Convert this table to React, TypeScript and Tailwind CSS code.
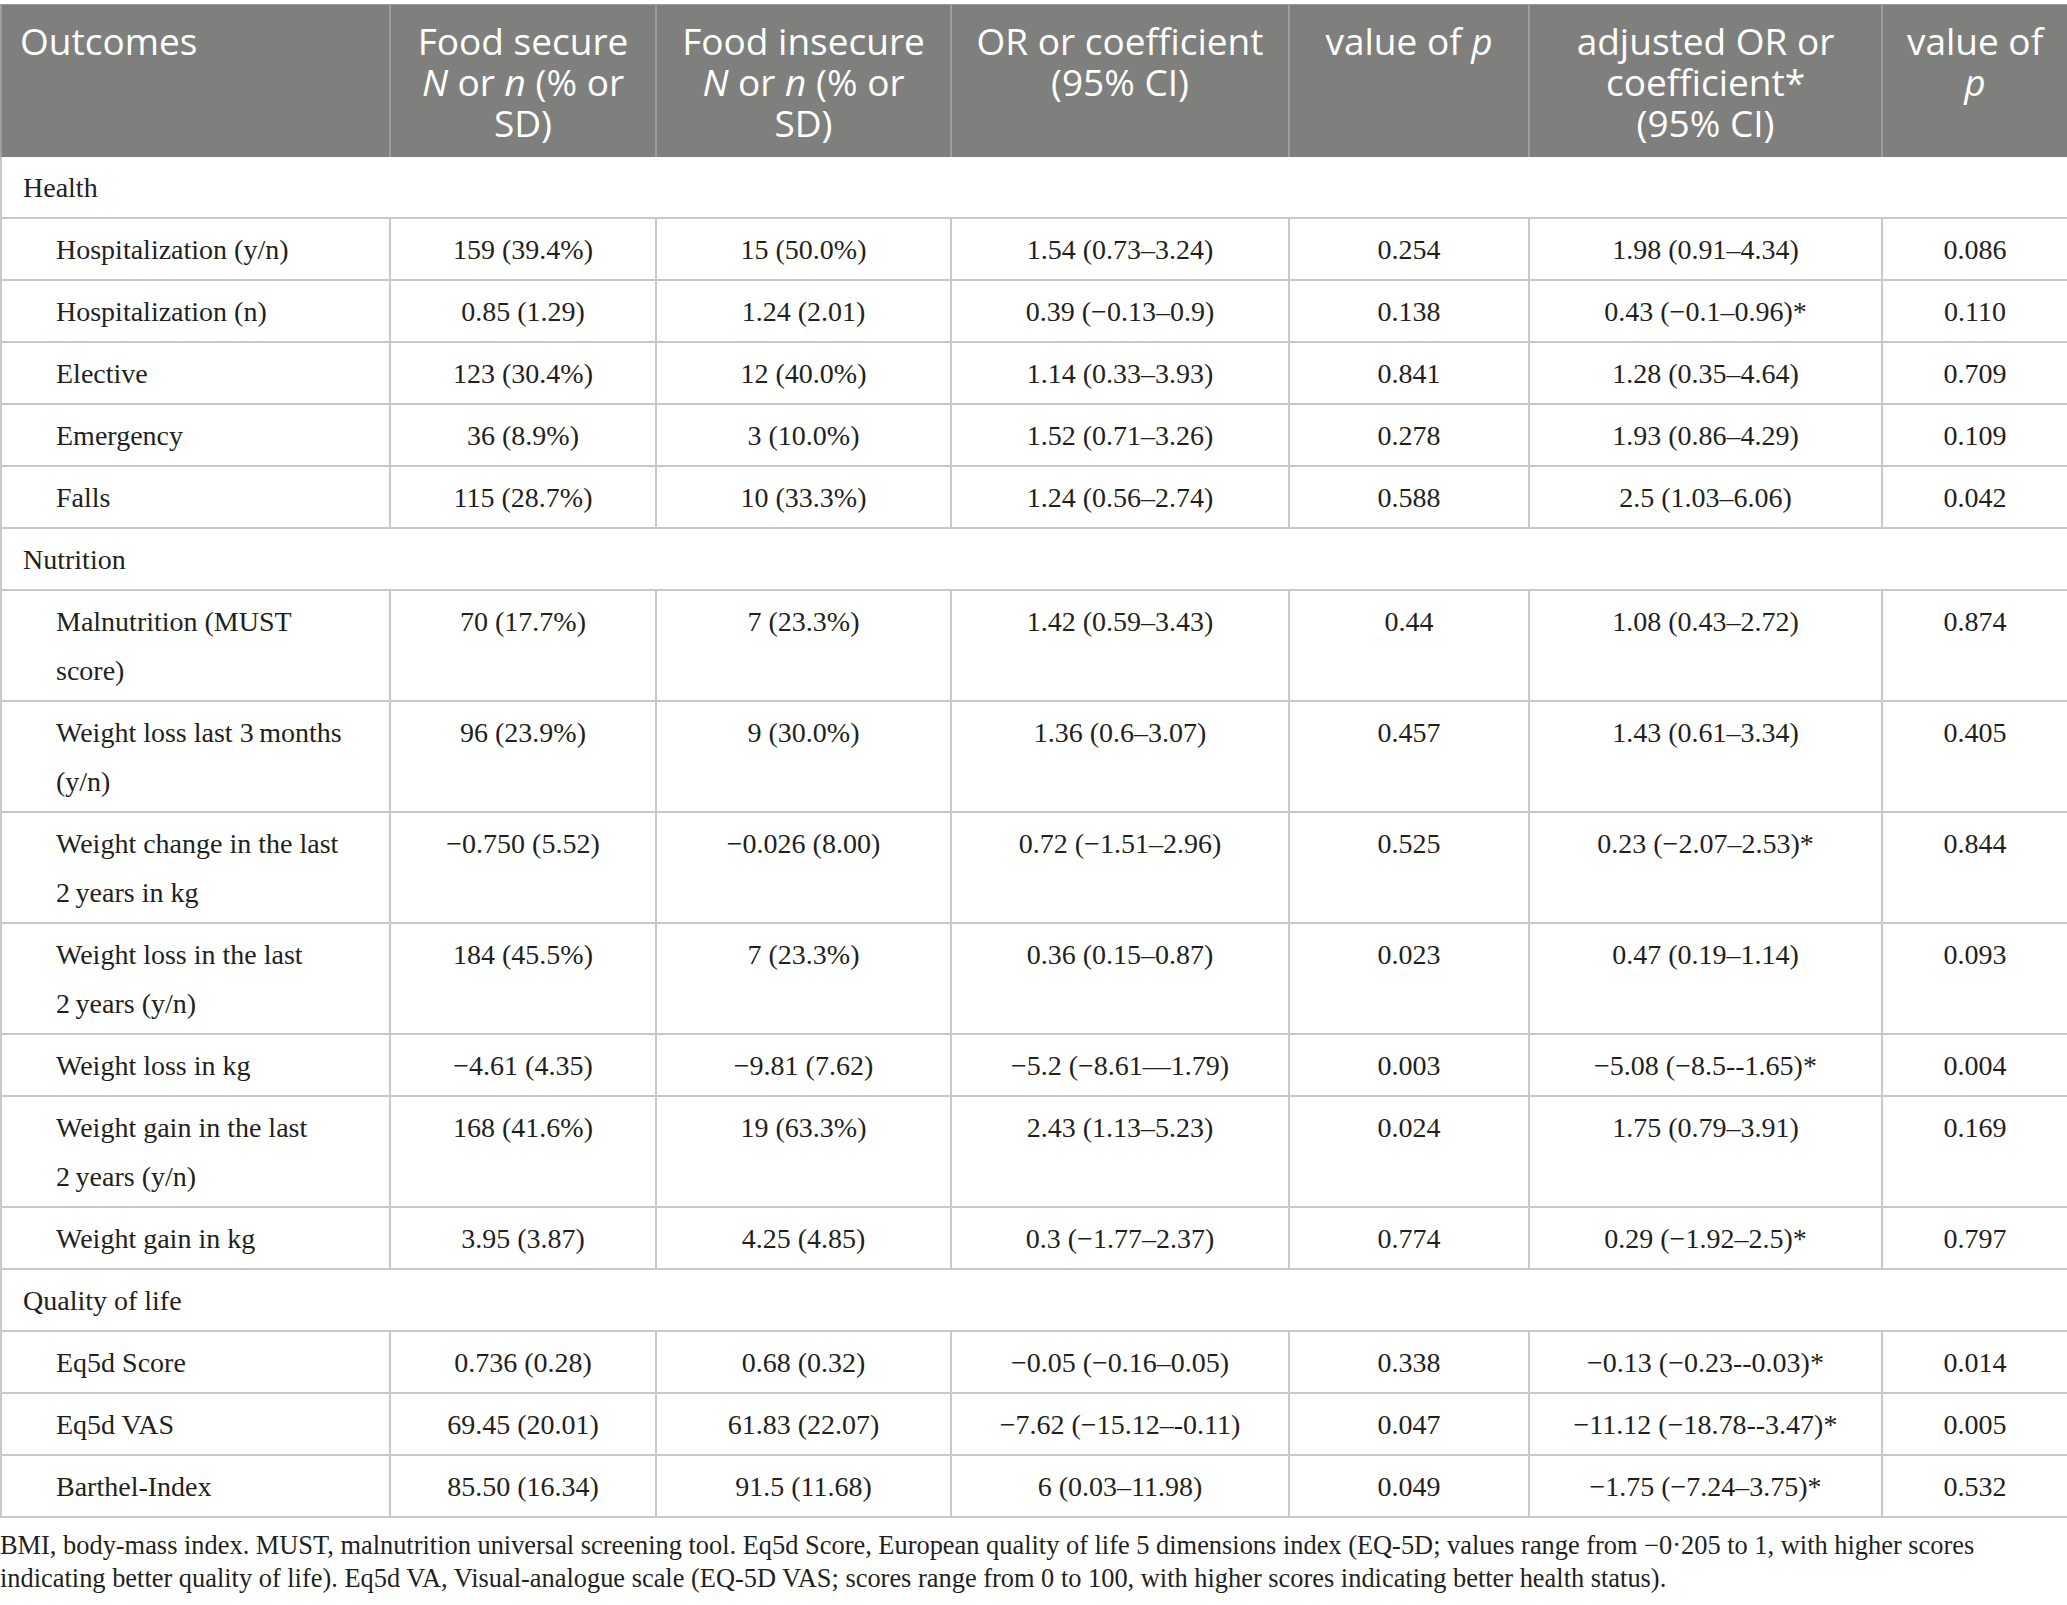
import React from "react";

type Row =
  | { kind: "section"; label: string }
  | { kind: "data"; cells: string[] };

const NB = "\u202F";

const rows: Row[] = [
  { kind: "section", label: "Health" },
  { kind: "data", cells: ["Hospitalization (y/n)", "159 (39.4%)", "15 (50.0%)", "1.54 (0.73–3.24)", "0.254", "1.98 (0.91–4.34)", "0.086"] },
  { kind: "data", cells: ["Hospitalization (n)", "0.85 (1.29)", "1.24 (2.01)", "0.39 (−0.13–0.9)", "0.138", "0.43 (−0.1–0.96)*", "0.110"] },
  { kind: "data", cells: ["Elective", "123 (30.4%)", "12 (40.0%)", "1.14 (0.33–3.93)", "0.841", "1.28 (0.35–4.64)", "0.709"] },
  { kind: "data", cells: ["Emergency", "36 (8.9%)", "3 (10.0%)", "1.52 (0.71–3.26)", "0.278", "1.93 (0.86–4.29)", "0.109"] },
  { kind: "data", cells: ["Falls", "115 (28.7%)", "10 (33.3%)", "1.24 (0.56–2.74)", "0.588", "2.5 (1.03–6.06)", "0.042"] },
  { kind: "section", label: "Nutrition" },
  { kind: "data", cells: ["Malnutrition (MUST score)", "70 (17.7%)", "7 (23.3%)", "1.42 (0.59–3.43)", "0.44", "1.08 (0.43–2.72)", "0.874"] },
  { kind: "data", cells: [`Weight loss last 3${NB}months (y/n)`, "96 (23.9%)", "9 (30.0%)", "1.36 (0.6–3.07)", "0.457", "1.43 (0.61–3.34)", "0.405"] },
  { kind: "data", cells: [`Weight change in the last 2${NB}years in kg`, "−0.750 (5.52)", "−0.026 (8.00)", "0.72 (−1.51–2.96)", "0.525", "0.23 (−2.07–2.53)*", "0.844"] },
  { kind: "data", cells: [`Weight loss in the last 2${NB}years (y/n)`, "184 (45.5%)", "7 (23.3%)", "0.36 (0.15–0.87)", "0.023", "0.47 (0.19–1.14)", "0.093"] },
  { kind: "data", cells: ["Weight loss in kg", "−4.61 (4.35)", "−9.81 (7.62)", "−5.2 (−8.61—1.79)", "0.003", "−5.08 (−8.5--1.65)*", "0.004"] },
  { kind: "data", cells: [`Weight gain in the last 2${NB}years (y/n)`, "168 (41.6%)", "19 (63.3%)", "2.43 (1.13–5.23)", "0.024", "1.75 (0.79–3.91)", "0.169"] },
  { kind: "data", cells: ["Weight gain in kg", "3.95 (3.87)", "4.25 (4.85)", "0.3 (−1.77–2.37)", "0.774", "0.29 (−1.92–2.5)*", "0.797"] },
  { kind: "section", label: "Quality of life" },
  { kind: "data", cells: ["Eq5d Score", "0.736 (0.28)", "0.68 (0.32)", "−0.05 (−0.16–0.05)", "0.338", "−0.13 (−0.23--0.03)*", "0.014"] },
  { kind: "data", cells: ["Eq5d VAS", "69.45 (20.01)", "61.83 (22.07)", "−7.62 (−15.12–-0.11)", "0.047", "−11.12 (−18.78--3.47)*", "0.005"] },
  { kind: "data", cells: ["Barthel-Index", "85.50 (16.34)", "91.5 (11.68)", "6 (0.03–11.98)", "0.049", "−1.75 (−7.24–3.75)*", "0.532"] },
];

const th =
  "bg-[#7f807e] text-white font-normal align-top text-[37px] leading-[41px] pt-[15px] pb-[14px] border-x-2 border-t border-[#9d9e9c]";

export default function App() {
  return (
    <div className="w-[2067px] bg-white pt-[4px] text-[#231f20]">
      <table className="w-[2067px] table-fixed border-collapse">
        <colgroup>
          <col className="w-[389px]" />
          <col className="w-[266px]" />
          <col className="w-[295px]" />
          <col className="w-[338px]" />
          <col className="w-[240px]" />
          <col className="w-[353px]" />
          <col className="w-[186px]" />
        </colgroup>
        <thead className="font-['Open_Sans',sans-serif]">
          <tr>
            <th className={`${th} text-left pl-[18px]`}>Outcomes</th>
            <th className={`${th} text-center px-[20px]`}>
              Food secure <i>N</i> or <i>n</i> (% or SD)
            </th>
            <th className={`${th} text-center px-[22px]`}>
              Food insecure <i>N</i> or <i>n</i> (% or SD)
            </th>
            <th className={`${th} text-center px-[20px]`}>OR or coefficient (95% CI)</th>
            <th className={`${th} text-center px-[10px]`}>
              value of <i>p</i>
            </th>
            <th className={`${th} text-center px-[35px]`}>adjusted OR or coefficient* (95% CI)</th>
            <th className={`${th} text-center px-[14px]`}>
              value of <i>p</i>
            </th>
          </tr>
        </thead>
        <tbody className="font-['Liberation_Serif',serif] text-[28px] leading-[49px]">
          {rows.map((r, i) =>
            r.kind === "section" ? (
              <tr key={i} className="border-b-2 border-[#c8c8c8]">
                <td colSpan={7} className="border-x-2 border-[#c8c8c8] pl-[21px] pt-[6px] pb-[5px] align-top">
                  {r.label}
                </td>
              </tr>
            ) : (
              <tr key={i} className="border-b-2 border-[#c8c8c8]">
                {r.cells.map((c, j) => (
                  <td
                    key={j}
                    className={
                      j === 0
                        ? "border-x-2 border-[#c8c8c8] pl-[54px] pr-[30px] pt-[6px] pb-[5px] align-top text-left"
                        : "border-x-2 border-[#c8c8c8] px-[6px] pt-[6px] pb-[5px] align-top text-center whitespace-nowrap"
                    }
                  >
                    {c}
                  </td>
                ))}
              </tr>
            )
          )}
        </tbody>
      </table>
      <p className="mt-[11px] font-['Liberation_Serif',serif] text-[26.4px] leading-[33px] text-[#231f20]">
        BMI, body-mass index. MUST, malnutrition universal screening tool. Eq5d Score, European quality of life 5 dimensions index (EQ-5D; values range from −0·205 to 1, with higher scores indicating better quality of life). Eq5d VA, Visual-analogue scale (EQ-5D VAS; scores range from 0 to 100, with higher scores indicating better health status).
      </p>
    </div>
  );
}
